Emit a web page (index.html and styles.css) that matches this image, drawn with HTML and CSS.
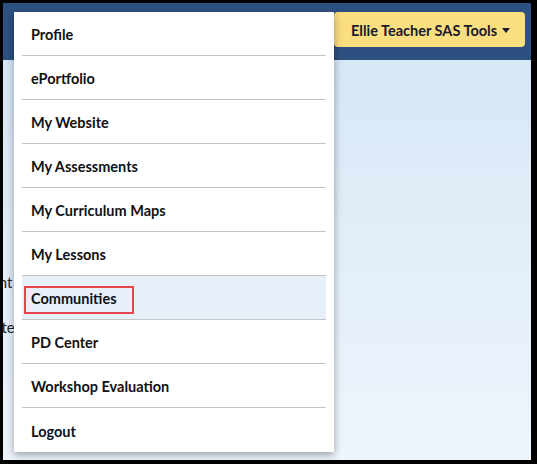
FILE: index.html
```html
<!DOCTYPE html>
<html lang="en">
<head>
    <meta charset="UTF-8">
    <meta name="viewport" content="width=device-width, initial-scale=1.0">
    <title>SAS Tools</title>
    <link rel="stylesheet" href="styles.css">
</head>
<body>
    <div class="frame">
        <header class="topbar">
            <button class="tools-btn">Ellie Teacher SAS Tools <span class="caret"></span></button>
        </header>

        <!-- page text behind the menu -->
        <div class="page">
            <p class="line line-one">Student</p>
            <p class="line line-two">Create</p>
        </div>

        <ul class="tools-menu">
            <li class="item">Profile</li>
            <li class="item">ePortfolio</li>
            <li class="item">My Website</li>
            <li class="item">My Assessments</li>
            <li class="item">My Curriculum Maps</li>
            <li class="item">My Lessons</li>
            <li class="item active">Communities<span class="callout"></span></li>
            <li class="item">PD Center</li>
            <li class="item">Workshop Evaluation</li>
            <li class="item">Logout</li>
        </ul>
    </div>
</body>
</html>
```

FILE: styles.css
```css
html, body {
    margin: 0;
    height: 100%;
}
body {
    background-color: #000;
    font-family: Lato, "Liberation Sans", sans-serif;
    padding: 3px 6px 4px 3px;
    box-sizing: border-box;
}
.frame {
    position: relative;
    height: 100%;
    overflow: hidden;
    background: linear-gradient(to bottom, #d3e5f5 0%, #e4eff9 60%, #eef5fc 100%);
}
.topbar {
    height: 57px;
    background-color: #2c5080;
    display: flex;
    justify-content: flex-end;
    align-items: flex-start;
    padding: 9px 6px 0 0;
    box-sizing: border-box;
}
.tools-btn {
    width: 191px;
    height: 35px;
    background-color: #fade80;
    border: none;
    border-radius: 4px;
    font-family: inherit;
    font-size: 14.5px;
    font-weight: bold;
    color: #1a1a2a;
    padding: 1px 0 0 2px;
    display: flex;
    align-items: center;
    justify-content: center;
    gap: 5px;
}
.caret {
    width: 0;
    height: 0;
    border-left: 4.5px solid transparent;
    border-right: 4.5px solid transparent;
    border-top: 5px solid #1a1a2a;
    margin-top: 1px;
}
.page {
    padding-top: 212px;
}
.line {
    margin: 0;
    font-size: 15px;
    color: #222;
    line-height: 20px;
}
.line-one {
    margin-left: -42px;
}
.line-two {
    margin-left: -32px;
    margin-top: 25px;
}
.tools-menu {
    position: absolute;
    top: 9px;
    left: 11px;
    width: 320px;
    margin: 0;
    padding: 0 8px;
    box-sizing: border-box;
    list-style: none;
    background-color: #fff;
    box-shadow: 0 3px 8px rgba(0, 0, 0, 0.35);
}
.item {
    position: relative;
    height: 44px;
    box-sizing: border-box;
    padding: 2px 0 0 9px;
    display: flex;
    align-items: center;
    font-size: 14.5px;
    font-weight: bold;
    color: #111;
    border-bottom: 1px solid #c4c4c4;
}
.item:last-child {
    border-bottom: none;
}
.item.active {
    background-color: #e7eff8;
}
.callout {
    position: absolute;
    left: 2px;
    top: 10px;
    width: 110px;
    height: 28px;
    box-sizing: border-box;
    border: 2px solid #e8434a;
}
```
